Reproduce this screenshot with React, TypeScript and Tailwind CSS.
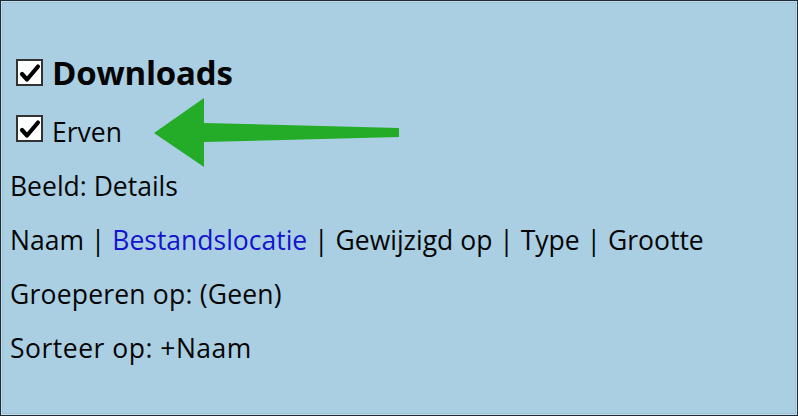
import React from "react";

function Check() {
  return (
    <span className="flex h-[27px] w-[27px] shrink-0 items-center justify-center border-2 border-[#333] bg-white">
      <svg width="23" height="23" viewBox="0 0 23 23">
        <path d="M4 13 L9 18.5 L20 5.5" fill="none" stroke="#000" strokeWidth="4.2" strokeLinecap="round" strokeLinejoin="round" />
      </svg>
    </span>
  );
}

export default function App() {
  return (
    <div
      className="relative h-[416px] w-[798px] overflow-hidden border border-[#1c2a36] bg-[#aacfe3] text-[#050505] shadow-[inset_0_0_0_1px_#c6deeb,inset_0_0_0_2px_#9fc4d8]"
      style={{ fontFamily: "'Open Sans', 'Segoe UI', sans-serif" }}
    >
      <div className="flex flex-col pl-[9px] pt-[49px]">
        <div className="flex h-[46px] items-start pl-[6px]">
          <span className="mt-[9px]"><Check /></span>
          <span className="ml-[9px] text-[33px] font-bold leading-[46px] tracking-[-0.2px]">Downloads</span>
        </div>
        <div className="mt-[9px] flex h-[54px] items-start pl-[6px]">
          <span className="mt-[10px]"><Check /></span>
          <span className="ml-[9px] text-[26.5px] leading-[54px]">Erven</span>
        </div>
        <div className="text-[26.5px] leading-[54px]">Beeld: Details</div>
        <div className="text-[26.5px] leading-[54px]">
          Naam | <span className="text-[#1414cc]">Bestandslocatie</span> | Gewijzigd op | Type | Grootte
        </div>
        <div className="text-[26.5px] leading-[54px] tracking-[0.2px]">Groeperen op: (Geen)</div>
        <div className="text-[26.5px] leading-[54px] tracking-[0.5px]">Sorteer op: +Naam</div>
      </div>
      {/* green pointer arrow over the list */}
      <svg className="absolute left-0 top-0" width="798" height="416" viewBox="0 0 798 416">
        <polygon
          points="153,132 203,97 203,122 398,127 398,136 203,141 203,166"
          fill="#24ab27"
        />
      </svg>
    </div>
  );
}
